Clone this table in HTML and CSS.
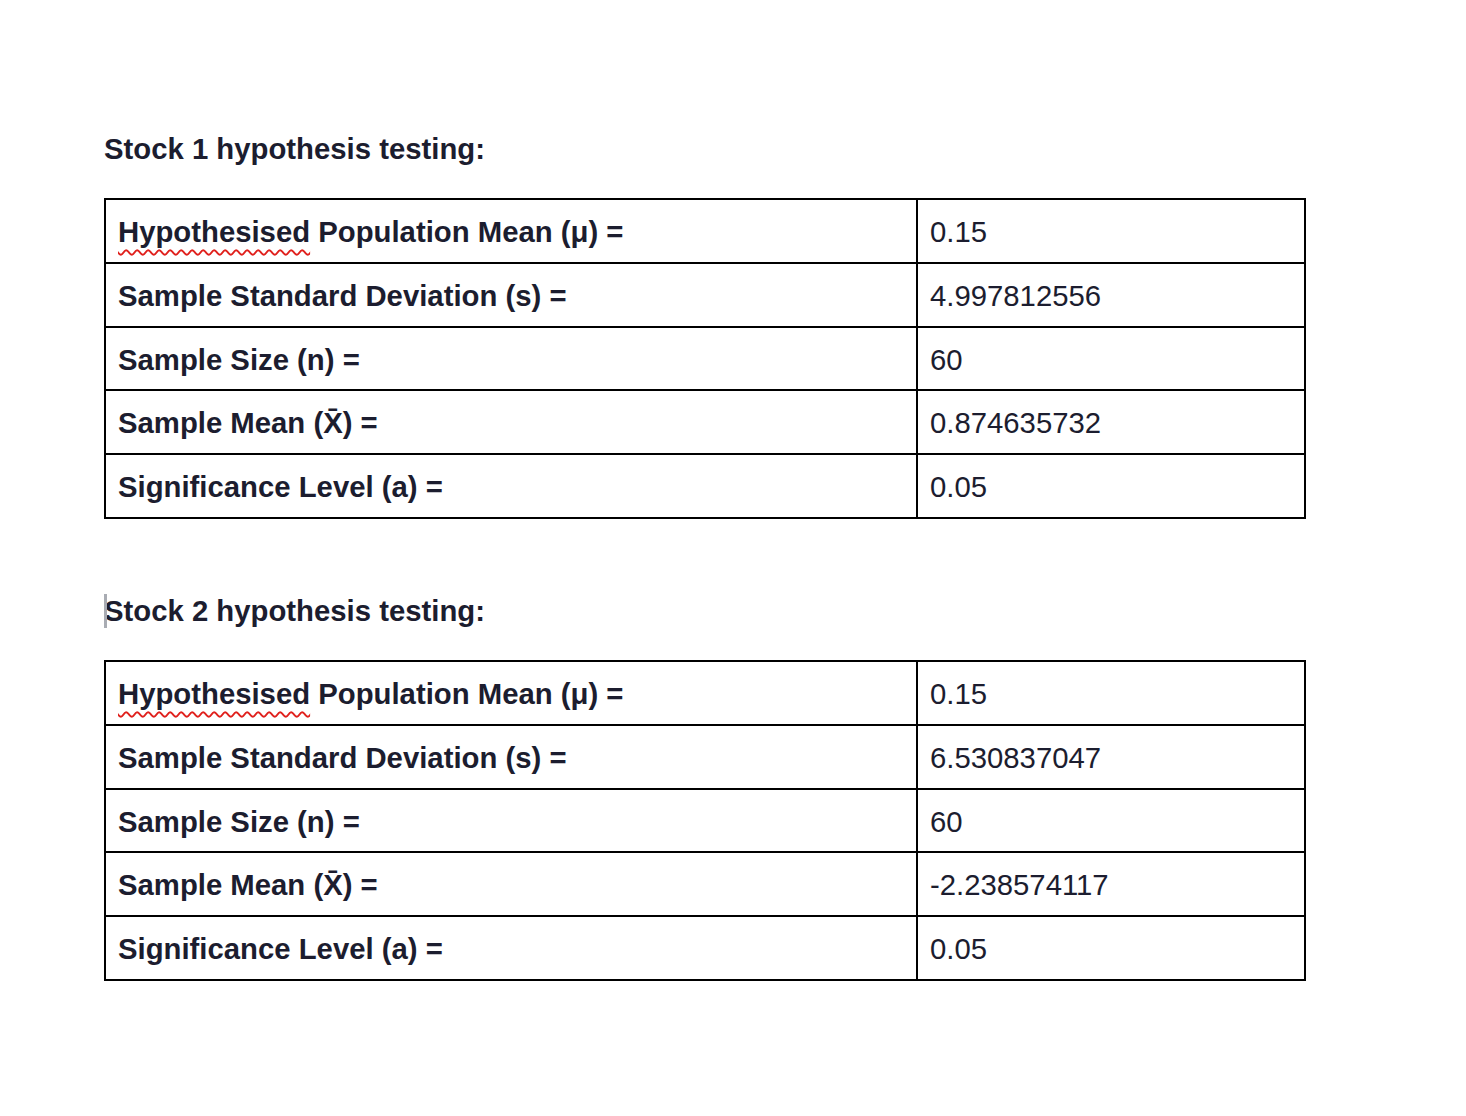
FILE: index.html
```html
<!DOCTYPE html>
<html lang="en">
<head>
<meta charset="utf-8">
<title>Hypothesis testing</title>
<link rel="stylesheet" href="styles.css">
</head>
<body>
<main class="doc">
  <section class="block">
    <h2 class="heading">Stock 1 hypothesis testing:</h2>
    <table class="stats">
      <colgroup><col class="col-label"><col class="col-value"></colgroup>
      <tr><td class="label"><span class="spell">Hypothesised</span> Population Mean (μ) =</td><td class="value">0.15</td></tr>
      <tr><td class="label">Sample Standard Deviation (s) =</td><td class="value">4.997812556</td></tr>
      <tr><td class="label">Sample Size (n) =</td><td class="value">60</td></tr>
      <tr><td class="label">Sample Mean (X̄) =</td><td class="value">0.874635732</td></tr>
      <tr><td class="label">Significance Level (a) =</td><td class="value">0.05</td></tr>
    </table>
  </section>
  <section class="block">
    <h2 class="heading caret">Stock 2 hypothesis testing:</h2>
    <table class="stats">
      <colgroup><col class="col-label"><col class="col-value"></colgroup>
      <tr><td class="label"><span class="spell">Hypothesised</span> Population Mean (μ) =</td><td class="value">0.15</td></tr>
      <tr><td class="label">Sample Standard Deviation (s) =</td><td class="value">6.530837047</td></tr>
      <tr><td class="label">Sample Size (n) =</td><td class="value">60</td></tr>
      <tr><td class="label">Sample Mean (X̄) =</td><td class="value">-2.238574117</td></tr>
      <tr><td class="label">Significance Level (a) =</td><td class="value">0.05</td></tr>
    </table>
  </section>
</main>
</body>
</html>
```

FILE: styles.css
```css
html, body {
  margin: 0;
  padding: 0;
  background: #ffffff;
}

body {
  font-family: "Liberation Sans", Arial, sans-serif;
  color: #1c1d2f;
}

.doc {
  padding: 132px 0 0 104px;
  display: flex;
  flex-direction: column;
  gap: 75px;
}

.block {
  display: flex;
  flex-direction: column;
  gap: 32px;
}

.heading {
  margin: 0;
  font-size: 29.3px;
  line-height: 34px;
  font-weight: 700;
  position: relative;
}

.caret::before {
  content: "";
  position: absolute;
  left: 0;
  top: 0;
  width: 2.5px;
  height: 34px;
  background: #a9acb3;
}

.stats {
  border-collapse: collapse;
  width: 1200px;
  table-layout: fixed;
}

.col-label { width: 812px; }
.col-value { width: 388px; }

.stats td {
  border: 2px solid #000;
  padding: 15px 12px 12.8px;
  font-size: 29.3px;
  line-height: 34px;
  white-space: nowrap;
}

.label { font-weight: 700; }
.value { font-weight: 400; }

.spell {
  text-decoration: underline wavy #e0201c;
  text-decoration-thickness: 1.6px;
  text-underline-offset: 7px;
  text-decoration-skip-ink: none;
}
```
